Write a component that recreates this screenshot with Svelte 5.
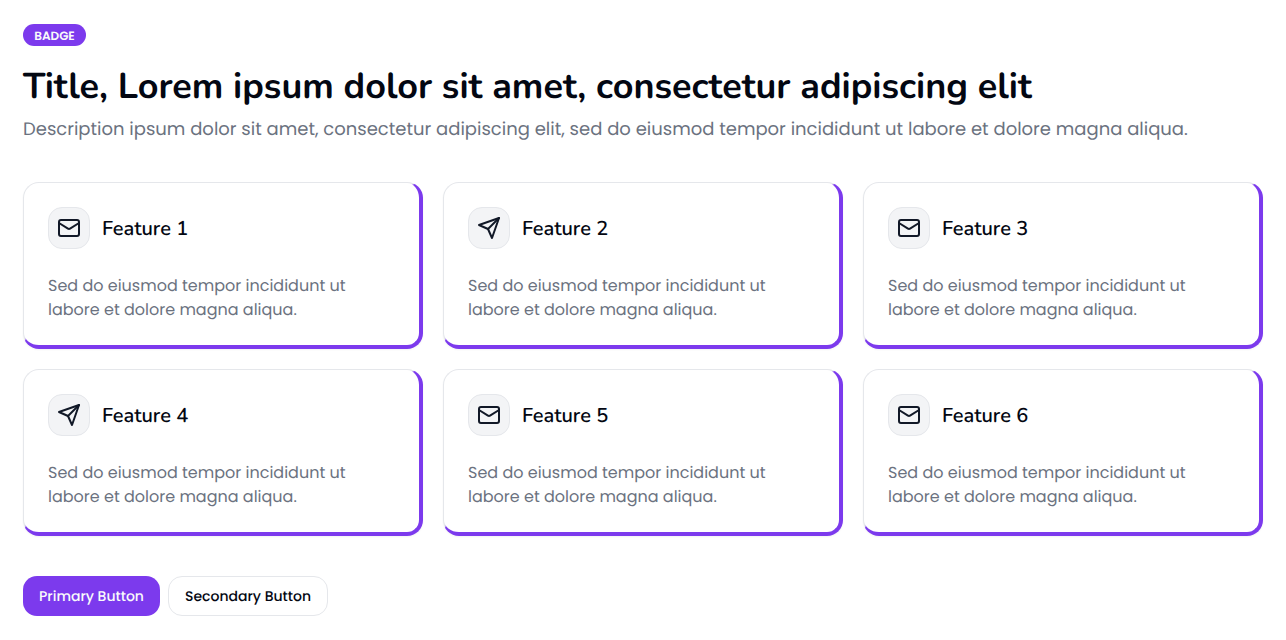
<script>
  const items = ['mail', 'send', 'mail', 'send', 'mail', 'mail'];
</script>

<section class="features">
  <header>
    <span class="badge">BADGE</span>
    <h1><span class="cap">T</span>itle, Lorem ipsum dolor sit amet, consectetur adipiscing elit</h1>
    <p class="lead">Description ipsum dolor sit amet, consectetur adipiscing elit, sed do eiusmod tempor incididunt ut labore et dolore magna aliqua.</p>
  </header>

  <div class="grid">
    {#each items as icon, i}
      <article class="card">
        <div class="head">
          <div class="icon">
            <svg viewBox="0 0 24 24" width="24" height="24">
              {#if icon === 'mail'}
                <rect width="20" height="16" x="2" y="4" rx="2" />
                <path d="m22 7-8.97 5.7a1.94 1.94 0 0 1-2.06 0L2 7" />
              {:else}
                <path d="m22 2-7 20-4-9-9-4Z" />
                <path d="M22 2 11 13" />
              {/if}
            </svg>
          </div>
          <h2>Feature {i + 1}</h2>
        </div>
        <p class="body">Sed do eiusmod tempor incididunt ut<br />labore et dolore magna aliqua.</p>
      </article>
    {/each}
  </div>

  <div class="actions">
    <button class="primary">Primary Button</button>
    <button class="secondary">Secondary Button</button>
  </div>
</section>

<style>
  :global(body) {
    background: #fff;
  }
  .features {
    box-sizing: border-box;
    height: 640px;
    padding: 24px 23px;
    color: #030712;
    font-family: Poppins, Inter, sans-serif;
    overflow: hidden;
    text-rendering: geometricPrecision;
  }
  header {
    display: flex;
    flex-direction: column;
    align-items: flex-start;
    height: 158px;
  }
  .badge {
    box-sizing: border-box;
    width: 63px;
    height: 22px;
    border-radius: 11px;
    background: #7c3aed;
    color: #f9fafb;
    font-size: 12px;
    font-weight: 600;
    line-height: 25px;
    text-align: center;
  }
  h1 {
    margin: 21px 0 0;
    font-family: Nunito, "Noto Sans", sans-serif;
    font-size: 36px;
    font-weight: 700;
    line-height: 40px;
    white-space: nowrap;
  }
  .cap {
    letter-spacing: -0.7px;
  }
  .lead {
    margin: 9px 0 0;
    color: #6b7280;
    font-size: 18px;
    line-height: 28px;
    white-space: nowrap;
  }
  .grid {
    display: grid;
    grid-template-columns: repeat(3, 400px);
    grid-auto-rows: 167px;
    gap: 20px;
  }
  .card {
    box-sizing: border-box;
    padding: 24px;
    border: 1px solid #e5e7eb;
    border-right: 4px solid #7c3aed;
    border-bottom: 4px solid #7c3aed;
    border-radius: 16px;
    box-shadow: 0 1px 2px rgb(0 0 0 / 0.05);
  }
  .head {
    display: flex;
    align-items: center;
    gap: 12px;
    height: 42px;
  }
  .icon {
    box-sizing: border-box;
    display: grid;
    place-items: center;
    width: 42px;
    height: 42px;
    border: 1px solid #e5e7eb;
    border-radius: 14px;
    background: #f3f4f6;
  }
  svg {
    fill: none;
    stroke: #111827;
    stroke-width: 2;
    stroke-linecap: round;
    stroke-linejoin: round;
  }
  h2 {
    margin: 3px 0 0;
    font-family: Nunito, "Noto Sans", sans-serif;
    font-size: 20px;
    font-weight: 600;
    line-height: 28px;
  }
  .body {
    margin: 25px 0 0;
    color: #6b7280;
    font-size: 16px;
    line-height: 24px;
    white-space: nowrap;
  }
  .actions {
    display: flex;
    gap: 8px;
    margin-top: 40px;
  }
  button {
    box-sizing: border-box;
    height: 40px;
    padding: 0;
    border: 0;
    border-radius: 14px;
    font-family: inherit;
    font-size: 14px;
    font-weight: 500;
    line-height: 20px;
    white-space: nowrap;
    text-rendering: inherit;
  }
  .primary {
    width: 137px;
    background: #7c3aed;
    color: #f9fafb;
  }
  .secondary {
    width: 160px;
    border: 1px solid #e5e7eb;
    background: #fff;
    color: #030712;
  }
</style>
